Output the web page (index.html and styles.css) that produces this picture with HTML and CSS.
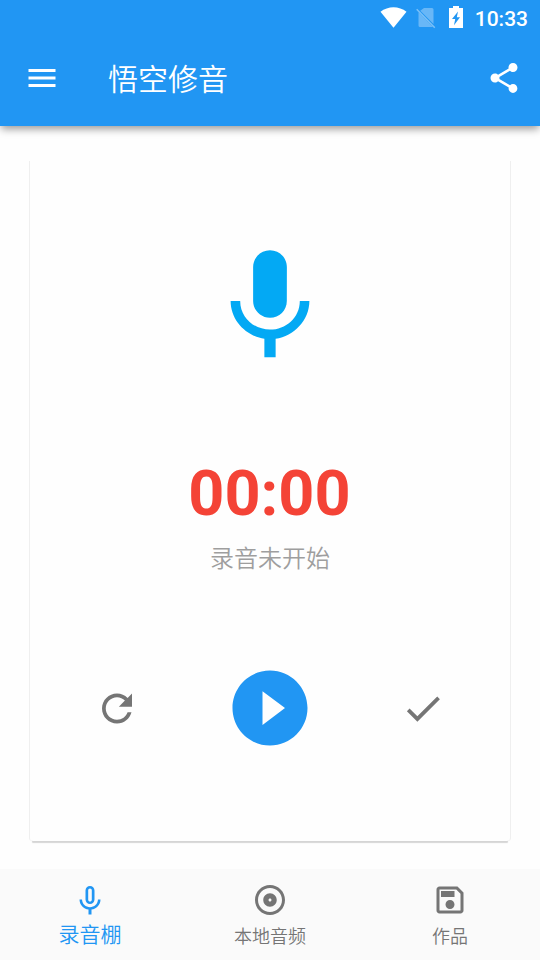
FILE: index.html
```
<!DOCTYPE html>
<html lang="zh-CN">
<head>
<meta charset="utf-8">
<title>悟空修音</title>
<link rel="stylesheet" href="styles.css">
</head>
<body>
<header class="header">
  <div class="status">
    <svg class="wifi" viewBox="0 0 27 21"><path d="M.5 4.700C8-1.400 19-1.400 26.500 4.700L13.500 20.800z"/></svg>
    <svg class="sim" viewBox="0 0 20 22"><path class="faint" d="M8 1H16a1.500 1.500 0 0 1 1.500 1.500V17L4.300 3.700zM2.500 5.300L16.800 20H4A1.500 1.500 0 0 1 2.500 18.500z"/><path class="slash" d="M.7 2.200L18.800 20.800"/></svg>
    <svg class="battery" viewBox="0 0 14 22"><path fill-rule="evenodd" d="M4 0h6v2h4v20H0V2h4zM9 5.500L3 13h3.200L5 19.200l6-8H7.800z"/></svg>
    <span class="clock">10:33</span>
  </div>
  <div class="toolbar">
    <svg class="icon" viewBox="0 0 24 24"><path d="M3 18h18v-2H3v2zm0-5h18v-2H3v2zm0-7v2h18V6H3z"/></svg>
    <h1 class="title">悟空修音</h1>
    <svg class="icon" viewBox="0 0 24 24"><path d="M18 16.080c-.76 0-1.440.3-1.960.77L8.910 12.700c.05-.23.09-.46.09-.7s-.04-.47-.09-.7l7.050-4.110c.54.5 1.250.81 2.040.81 1.660 0 3-1.340 3-3s-1.340-3-3-3-3 1.340-3 3c0 .24.04.47.09.7L8.040 9.810C7.500 9.310 6.790 9 6 9c-1.660 0-3 1.340-3 3s1.340 3 3 3c.79 0 1.500-.31 2.040-.81l7.120 4.160c-.05.21-.08.43-.08.65 0 1.610 1.310 2.920 2.920 2.920s2.920-1.310 2.920-2.920-1.310-2.920-2.920-2.920z"/></svg>
  </div>
</header>
<main class="content">
  <section class="card">
    <svg class="mic" viewBox="0 0 24 24"><path d="M12 14c1.660 0 2.990-1.340 2.990-3L15 5c0-1.660-1.340-3-3-3S9 3.340 9 5v6c0 1.660 1.340 3 3 3zm5.300-3c0 3-2.540 5.100-5.300 5.100S6.700 14 6.700 11H5c0 3.410 2.720 6.230 6 6.720V21h2v-3.280c3.280-.48 6-3.300 6-6.720h-1.700z"/></svg>
    <div class="timer">00:00</div>
    <div class="state">录音未开始</div>
    <div class="controls">
      <svg class="control" viewBox="0 0 24 24"><path d="M17.650 6.350C16.200 4.900 14.210 4 12 4c-4.420 0-7.990 3.580-7.990 8s3.570 8 7.990 8c3.730 0 6.840-2.550 7.730-6h-2.080c-.82 2.330-3.040 4-5.650 4-3.310 0-6-2.690-6-6s2.690-6 6-6c1.660 0 3.140.69 4.220 1.780L13 11h7V4l-2.350 2.350z"/></svg>
      <svg class="play" viewBox="0 0 24 24"><path d="M12 2C6.480 2 2 6.480 2 12s4.480 10 10 10 10-4.480 10-10S17.520 2 12 2zm-2 14.500v-9l6 4.500-6 4.500z"/></svg>
      <svg class="control" viewBox="0 0 24 24"><path d="M9 16.170L4.830 12l-1.420 1.410L9 19 21 7l-1.410-1.410z"/></svg>
    </div>
  </section>
</main>
<nav class="tabs">
  <div class="tab active">
    <svg class="icon" viewBox="0 0 24 24"><path d="M12 14c1.660 0 2.990-1.340 2.990-3L15 5c0-1.660-1.340-3-3-3S9 3.340 9 5v6c0 1.660 1.340 3 3 3zm-1.200-9.100c0-.66.54-1.200 1.200-1.200s1.200.54 1.200 1.200l-.01 6.200c0 .66-.53 1.200-1.190 1.200s-1.200-.54-1.200-1.200V4.900zm6.500 6.100c0 3-2.540 5.100-5.300 5.100S6.700 14 6.700 11H5c0 3.410 2.720 6.230 6 6.720V21h2v-3.280c3.280-.48 6-3.300 6-6.720h-1.700z"/></svg>
    <span class="label">录音棚</span>
  </div>
  <div class="tab">
    <svg class="icon" viewBox="0 0 24 24"><path d="M12 2C6.480 2 2 6.480 2 12s4.480 10 10 10 10-4.480 10-10S17.520 2 12 2zm0 18c-4.410 0-8-3.590-8-8s3.590-8 8-8 8 3.590 8 8-3.590 8-8 8zm0-12.500c-2.490 0-4.500 2.010-4.500 4.500s2.010 4.500 4.500 4.500 4.500-2.010 4.500-4.500-2.010-4.500-4.500-4.500zm0 5.500c-.55 0-1-.45-1-1s.45-1 1-1 1 .45 1 1-.45 1-1 1z"/></svg>
    <span class="label">本地音频</span>
  </div>
  <div class="tab">
    <svg class="icon" viewBox="0 0 24 24"><path d="M17 3H5c-1.110 0-2 .9-2 2v14c0 1.100.89 2 2 2h14c1.100 0 2-.9 2-2V7l-4-4zm2 16H5V5h11.170L19 7.830V19zm-7-7c-1.660 0-3 1.340-3 3s1.340 3 3 3 3-1.340 3-3-1.340-3-3-3zM6 6h9v4H6z"/></svg>
    <span class="label">作品</span>
  </div>
</nav>
</body>
</html>
```
FILE: styles.css
```
* { box-sizing: border-box; }

body {
  margin: 0;
  height: 960px;
  display: flex;
  flex-direction: column;
  overflow: hidden;
  background: #fefefe;
  font-family: Roboto, "Noto Sans CJK SC", sans-serif;
}

svg { display: block; flex: none; fill: currentColor; }
.icon { width: 36px; height: 36px; }

.header {
  height: 126px;
  background: #2196f3;
  color: #fff;
  box-shadow: 0 4px 8px -1px rgba(0, 0, 0, .4);
}

.status {
  height: 36px;
  display: flex;
  padding: 6px 12px 0 0;
  justify-content: flex-end;
}
.wifi { width: 27px; height: 21px; margin: 1px 9px 0 0; }
.sim { width: 20px; height: 22px; margin: 1px 13px 0 0; }
.battery { width: 14px; height: 22px; margin-right: 12px; }
.faint { opacity: .32; }
.slash { stroke: #fff; stroke-width: 1.5; opacity: .4; }
.clock { font-size: 21px; line-height: 26px; font-weight: 500; }

.toolbar {
  height: 84px;
  display: flex;
  align-items: center;
  padding: 0 18px 0 24px;
}
.title {
  flex: 1;
  margin: 0 0 2px 48px;
  font-family: "Noto Sans CJK SC", sans-serif;
  font-size: 30px;
  line-height: 44px;
  font-weight: 350;
}

.content {
  flex: 1;
  padding: 35px 30px 27px;
}
.card {
  height: 680px;
  display: flex;
  flex-direction: column;
  align-items: center;
  padding-top: 78px;
  border-radius: 0 0 3px 3px;
  background: #fefefe;
  box-shadow:
    -1px 0 0 rgba(0, 0, 0, .06),
    1px 0 0 rgba(0, 0, 0, .06),
    0 4px 1px -2px rgba(0, 0, 0, .16);
}
.mic { width: 136px; height: 135px; color: #03a9f4; }
.timer {
  margin: 83px 1px 0 0;
  font-size: 63px;
  line-height: 74px;
  font-weight: 700;
  color: #f44336;
}
.state {
  margin-top: 8px;
  font-family: "Noto Sans CJK SC", sans-serif;
  font-size: 24px;
  line-height: 36px;
  font-weight: 350;
  color: #9e9e9e;
}
.controls {
  width: 100%;
  margin-top: 88px;
  padding: 0 64px;
  display: flex;
  align-items: center;
  justify-content: space-between;
}
.control { width: 46px; height: 45px; color: #757575; }
.play { width: 90px; height: 90px; color: #2196f3; }

.tabs {
  height: 90px;
  display: flex;
  background: #fafafa;
  box-shadow: 0 0 1px rgba(0, 0, 0, .1);
}
.tab {
  flex: 1;
  display: flex;
  flex-direction: column;
  align-items: center;
  padding-top: 12px;
  color: #757575;
}
.label {
  margin-top: 4px;
  font-family: "Noto Sans CJK SC", sans-serif;
  font-size: 18px;
  line-height: 27px;
  font-weight: 350;
}
.active { padding-top: 13px; color: #2196f3; }
.active .label { margin-top: 1px; font-size: 21px; }
```
